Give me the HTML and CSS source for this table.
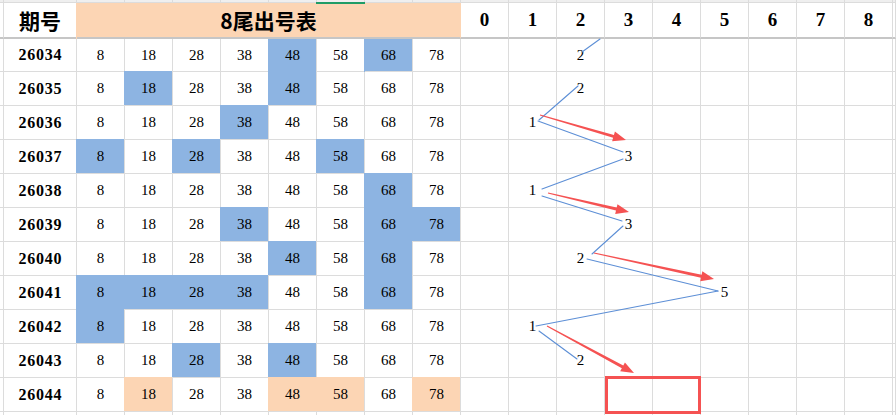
FILE: index.html
```html
<!DOCTYPE html>
<html lang="zh">
<head>
<meta charset="utf-8">
<title>8尾出号表</title>
<link rel="stylesheet" href="styles.css">
</head>
<body>
<div class="sheet">
  <div class="row top">
    <div class="c"></div><div class="c"></div>
    <div class="c"></div><div class="c"></div><div class="c"></div><div class="c"></div><div class="c"></div><div class="c"></div><div class="c"></div><div class="c"></div>
    <div class="c"></div><div class="c"></div><div class="c"></div><div class="c"></div><div class="c"></div><div class="c"></div><div class="c"></div><div class="c"></div><div class="c"></div>
    <div class="c"></div>
  </div>
  <div class="row head">
    <div class="c"></div>
    <div class="c h-label">期号</div>
    <div class="c h-label merge">8尾出号表</div>
    <div class="c h-digit">0</div><div class="c h-digit">1</div><div class="c h-digit">2</div><div class="c h-digit">3</div><div class="c h-digit">4</div><div class="c h-digit">5</div><div class="c h-digit">6</div><div class="c h-digit">7</div><div class="c h-digit">8</div>
    <div class="c"></div>
  </div>

  <div class="row first">
    <div class="c"></div><div class="c id">26034</div>
    <div class="c">8</div><div class="c">18</div><div class="c">28</div><div class="c">38</div><div class="c b">48</div><div class="c">58</div><div class="c b">68</div><div class="c">78</div>
    <div class="c"></div><div class="c"></div><div class="c">2</div><div class="c"></div><div class="c"></div><div class="c"></div><div class="c"></div><div class="c"></div><div class="c"></div>
    <div class="c"></div>
  </div>
  <div class="row">
    <div class="c"></div><div class="c id">26035</div>
    <div class="c">8</div><div class="c b">18</div><div class="c">28</div><div class="c">38</div><div class="c b">48</div><div class="c">58</div><div class="c">68</div><div class="c">78</div>
    <div class="c"></div><div class="c"></div><div class="c">2</div><div class="c"></div><div class="c"></div><div class="c"></div><div class="c"></div><div class="c"></div><div class="c"></div>
    <div class="c"></div>
  </div>
  <div class="row">
    <div class="c"></div><div class="c id">26036</div>
    <div class="c">8</div><div class="c">18</div><div class="c">28</div><div class="c b">38</div><div class="c">48</div><div class="c">58</div><div class="c">68</div><div class="c">78</div>
    <div class="c"></div><div class="c">1</div><div class="c"></div><div class="c"></div><div class="c"></div><div class="c"></div><div class="c"></div><div class="c"></div><div class="c"></div>
    <div class="c"></div>
  </div>
  <div class="row">
    <div class="c"></div><div class="c id">26037</div>
    <div class="c b">8</div><div class="c">18</div><div class="c b">28</div><div class="c">38</div><div class="c">48</div><div class="c b">58</div><div class="c">68</div><div class="c">78</div>
    <div class="c"></div><div class="c"></div><div class="c"></div><div class="c">3</div><div class="c"></div><div class="c"></div><div class="c"></div><div class="c"></div><div class="c"></div>
    <div class="c"></div>
  </div>
  <div class="row">
    <div class="c"></div><div class="c id">26038</div>
    <div class="c">8</div><div class="c">18</div><div class="c">28</div><div class="c">38</div><div class="c">48</div><div class="c">58</div><div class="c b">68</div><div class="c">78</div>
    <div class="c"></div><div class="c">1</div><div class="c"></div><div class="c"></div><div class="c"></div><div class="c"></div><div class="c"></div><div class="c"></div><div class="c"></div>
    <div class="c"></div>
  </div>
  <div class="row">
    <div class="c"></div><div class="c id">26039</div>
    <div class="c">8</div><div class="c">18</div><div class="c">28</div><div class="c b">38</div><div class="c">48</div><div class="c">58</div><div class="c b">68</div><div class="c b">78</div>
    <div class="c"></div><div class="c"></div><div class="c"></div><div class="c">3</div><div class="c"></div><div class="c"></div><div class="c"></div><div class="c"></div><div class="c"></div>
    <div class="c"></div>
  </div>
  <div class="row">
    <div class="c"></div><div class="c id">26040</div>
    <div class="c">8</div><div class="c">18</div><div class="c">28</div><div class="c">38</div><div class="c b">48</div><div class="c">58</div><div class="c b">68</div><div class="c">78</div>
    <div class="c"></div><div class="c"></div><div class="c">2</div><div class="c"></div><div class="c"></div><div class="c"></div><div class="c"></div><div class="c"></div><div class="c"></div>
    <div class="c"></div>
  </div>
  <div class="row">
    <div class="c"></div><div class="c id">26041</div>
    <div class="c b">8</div><div class="c b">18</div><div class="c b">28</div><div class="c b">38</div><div class="c">48</div><div class="c">58</div><div class="c b">68</div><div class="c">78</div>
    <div class="c"></div><div class="c"></div><div class="c"></div><div class="c"></div><div class="c"></div><div class="c">5</div><div class="c"></div><div class="c"></div><div class="c"></div>
    <div class="c"></div>
  </div>
  <div class="row">
    <div class="c"></div><div class="c id">26042</div>
    <div class="c b">8</div><div class="c">18</div><div class="c">28</div><div class="c">38</div><div class="c">48</div><div class="c">58</div><div class="c">68</div><div class="c">78</div>
    <div class="c"></div><div class="c">1</div><div class="c"></div><div class="c"></div><div class="c"></div><div class="c"></div><div class="c"></div><div class="c"></div><div class="c"></div>
    <div class="c"></div>
  </div>
  <div class="row">
    <div class="c"></div><div class="c id">26043</div>
    <div class="c">8</div><div class="c">18</div><div class="c b">28</div><div class="c">38</div><div class="c b">48</div><div class="c">58</div><div class="c">68</div><div class="c">78</div>
    <div class="c"></div><div class="c"></div><div class="c">2</div><div class="c"></div><div class="c"></div><div class="c"></div><div class="c"></div><div class="c"></div><div class="c"></div>
    <div class="c"></div>
  </div>
  <div class="row">
    <div class="c"></div><div class="c id">26044</div>
    <div class="c">8</div><div class="c p">18</div><div class="c">28</div><div class="c">38</div><div class="c p">48</div><div class="c p">58</div><div class="c">68</div><div class="c p">78</div>
    <div class="c"></div><div class="c"></div><div class="c"></div><div class="c"></div><div class="c"></div><div class="c"></div><div class="c"></div><div class="c"></div><div class="c"></div>
    <div class="c"></div>
  </div>
  <div class="row tail">
    <div class="c"></div><div class="c"></div>
    <div class="c"></div><div class="c"></div><div class="c"></div><div class="c"></div><div class="c"></div><div class="c"></div><div class="c"></div><div class="c"></div>
    <div class="c"></div><div class="c"></div><div class="c"></div><div class="c"></div><div class="c"></div><div class="c"></div><div class="c"></div><div class="c"></div><div class="c"></div>
    <div class="c"></div>
  </div>

  <svg class="overlay" width="896" height="415" viewBox="0 0 896 415" xmlns="http://www.w3.org/2000/svg">
    <rect x="316" y="2" width="49" height="2" fill="#1f9c66"/>
    <g stroke="#5d8fd6" stroke-width="1.1" fill="none" stroke-linecap="round">
      <line x1="582" y1="52" x2="600" y2="39"/>
      <line x1="578" y1="86" x2="539" y2="120"/>
      <line x1="538" y1="121" x2="623" y2="152"/>
      <line x1="623" y1="159" x2="542" y2="189"/>
      <line x1="542" y1="196" x2="622" y2="221"/>
      <line x1="623" y1="226" x2="592" y2="254"/>
      <line x1="587" y1="259" x2="718" y2="291"/>
      <line x1="718" y1="291" x2="536" y2="326"/>
      <line x1="539" y1="331" x2="577" y2="359"/>
    </g>
    <g fill="#f55252">
      <polygon points="539.86,115.48 613.10,137.81 612.12,141.17 626,140 614.92,131.57 613.94,134.93 540.14,114.52"/>
      <polygon points="547.89,193.49 616.00,210.49 615.20,213.90 629,212 617.48,204.16 616.68,207.57 548.11,192.51"/>
      <polygon points="593.89,253.49 700.98,277.72 700.24,281.14 714,279 702.36,271.36 701.62,274.78 594.11,252.51"/>
      <polygon points="546.76,326.44 621.85,368.14 620.18,371.22 634,373 624.94,362.42 623.27,365.50 547.24,325.56"/>
    </g>
    <rect x="606.5" y="377.5" width="93" height="35" fill="none" stroke="#f55252" stroke-width="3"/>
  </svg>
</div>
</body>
</html>
```

FILE: styles.css
```css
* {
  box-sizing: border-box;
}

body {
  margin: 0;
  background: #ffffff;
  overflow: hidden;
}

.sheet {
  position: relative;
  width: 896px;
  height: 415px;
  overflow: hidden;
  display: flex;
  flex-direction: column;
}

.row {
  display: grid;
  grid-template-columns: 4px 73px repeat(17, 48px) 1fr;
  height: 34px;
  flex: none;
}

.row.top {
  height: 3px;
}

.row.top .c {
  background: #efefef;
}

.row.head {
  height: 36px;
}

.row.head .c {
  border-bottom: 2px solid #c6c6c6;
}

.row.first {
  height: 33px;
}

.row.tail {
  height: 12px;
}

.c {
  border-right: 1px solid #dcdcdc;
  border-bottom: 1px solid #dcdcdc;
  display: flex;
  align-items: center;
  justify-content: center;
  font-family: "Liberation Serif", serif;
  font-size: 15px;
  color: #000;
  background: #fff;
}

.id {
  font-weight: bold;
  font-size: 16px;
  letter-spacing: 0.8px;
  padding-left: 0.8px;
}

.h-label {
  font-family: "Noto Sans CJK SC", sans-serif;
  font-weight: 700;
  font-size: 21px;
}

.h-digit {
  font-family: "Liberation Serif", serif;
  font-weight: bold;
  font-size: 19px;
}

.row.head .merge {
  grid-column: span 8;
  background: #fcd5b4;
  border-right-color: #fcd5b4;
  box-shadow: -1px 0 0 #fcd5b4;
}

.b {
  background: #8db4e2;
  box-shadow: -1px -1px 0 #8db4e2;
}

.first .b {
  box-shadow: -1px 0 0 #8db4e2;
}

.p {
  background: #fcd5b4;
  box-shadow: -1px -1px 0 #fcd5b4;
}

.overlay {
  position: absolute;
  left: 0;
  top: 0;
  pointer-events: none;
}
```
